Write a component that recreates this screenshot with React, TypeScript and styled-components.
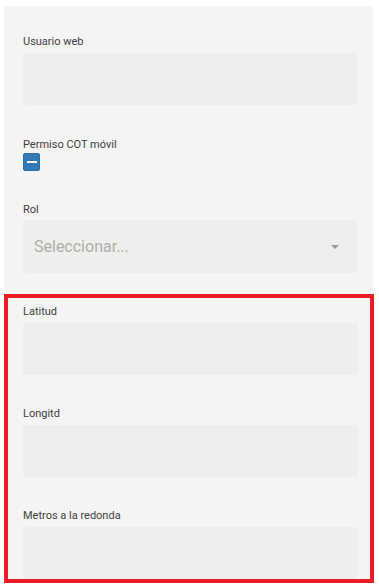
import styled, { createGlobalStyle } from 'styled-components';

const GlobalStyle = createGlobalStyle`
  html, body {
    margin: 0;
    padding: 0;
    background: #ffffff;
  }
  body {
    font-family: Roboto, "Liberation Sans", Arial, sans-serif;
  }
`;

const Panel = styled.div`
  margin: 6px 0 0 4px;
  width: 369px;
  padding-top: 29px;
  background: #f4f4f4;
`;

const Field = styled.div<{ $gap?: number; $after?: number }>`
  display: flex;
  flex-direction: column;
  gap: ${(p) => p.$gap ?? 4}px;
  padding: 0 16px 0 19px;
  margin-bottom: ${(p) => p.$after ?? 32}px;
`;

const Label = styled.label`
  font-size: 11px;
  line-height: 14px;
  color: #3f3f3f;
`;

const Input = styled.div`
  height: 52px;
  border-radius: 3px;
  background: #eeeeec;
`;

const Select = styled.div`
  height: 53px;
  border-radius: 3px;
  background: #eeeeec;
  display: flex;
  align-items: center;
  justify-content: space-between;
  padding: 0 18px 0 11px;
`;

const Placeholder = styled.span`
  font-size: 16px;
  color: #b0ada8;
`;

const Caret = styled.span`
  width: 0;
  height: 0;
  border-left: 4px solid transparent;
  border-right: 4px solid transparent;
  border-top: 4px solid #9a9a9a;
`;

const Check = styled.div`
  width: 17px;
  height: 18px;
  box-sizing: border-box;
  border-radius: 2px;
  background: #337ab7;
  border: 1px solid #2e6da4;
  display: flex;
  align-items: center;
  justify-content: center;

  &::before {
    content: '';
    width: 10px;
    height: 2px;
    background: #ffffff;
  }
`;

const Highlight = styled.section`
  margin-right: -1px;
  border: 4px solid #ec1c24;
  padding-top: 7px;

  ${Field} {
    padding: 0 12px 0 15px;
  }
`;

const TextField = ({ label, last }: { label: string; last?: boolean }) => (
  <Field $after={last ? 0 : 32}>
    <Label>{label}</Label>
    <Input />
  </Field>
);

const App = () => {
  return (
    <>
      <GlobalStyle />
      <Panel>
        <Field $after={33}>
          <Label>Usuario web</Label>
          <Input />
        </Field>
        <Field $gap={1}>
          <Label>Permiso COT móvil</Label>
          <Check />
        </Field>
        <Field $gap={3} $after={21}>
          <Label>Rol</Label>
          <Select>
            <Placeholder>Seleccionar...</Placeholder>
            <Caret />
          </Select>
        </Field>
        <Highlight>
          <TextField label="Latitud" />
          <TextField label="Longitd" />
          <TextField label="Metros a la redonda" last />
        </Highlight>
      </Panel>
    </>
  );
};

export default App;
